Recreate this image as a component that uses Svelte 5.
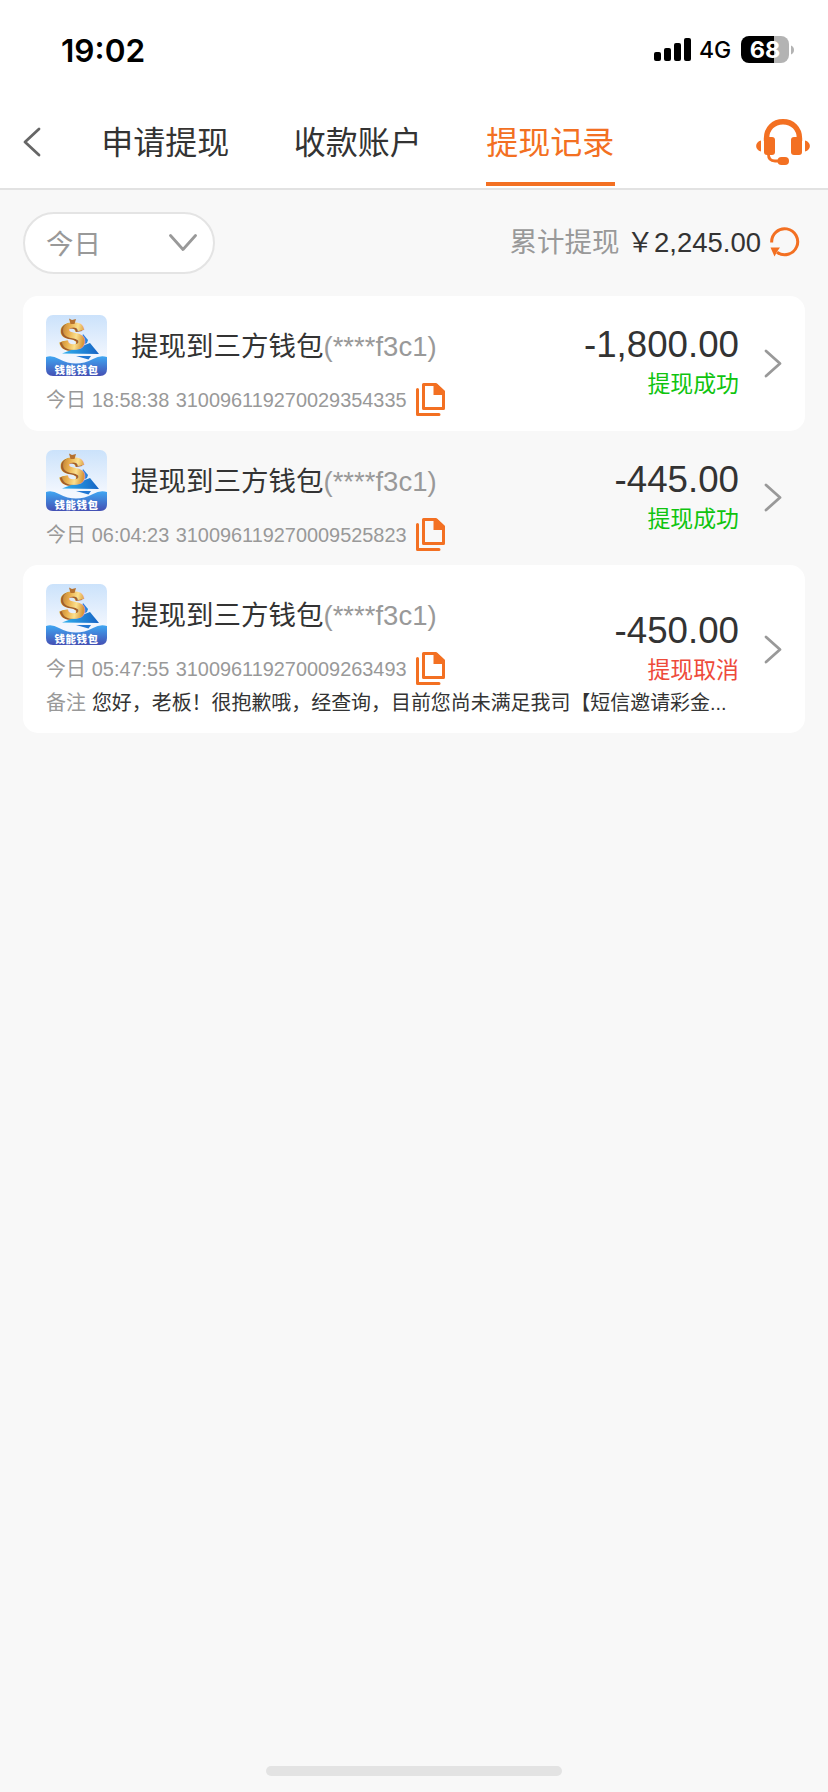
<script>
  let activeTab = "提现记录";
  const tabs = ["申请提现", "收款账户", "提现记录"];

  const records = [
    {
      time: "18:58:38",
      order: "310096119270029354335",
      amount: "-1,800.00",
      status: "提现成功",
      ok: true,
    },
    {
      time: "06:04:23",
      order: "310096119270009525823",
      amount: "-445.00",
      status: "提现成功",
      ok: true,
    },
    {
      time: "05:47:55",
      order: "310096119270009263493",
      amount: "-450.00",
      status: "提现取消",
      ok: false,
      remark: "您好，老板！很抱歉哦，经查询，目前您尚未满足我司【短信邀请彩金...",
    },
  ];
</script>

<div class="screen">
  <div class="status-bar">
    <span class="clock">19:02</span>
    <div class="indicators">
      <svg class="signal" width="37" height="23" viewBox="0 0 37 23">
        <rect x="0" y="14" width="7" height="9" rx="2" />
        <rect x="10" y="10" width="7" height="13" rx="2" />
        <rect x="20" y="5" width="7" height="18" rx="2" />
        <rect x="30" y="0" width="7" height="23" rx="2" />
      </svg>
      <span class="network">4G</span>
      <div class="battery"><span>68</span></div>
      <svg class="nub" width="3" height="10" viewBox="0 0 3 10">
        <path d="M0 0.5C4 2 4 8 0 9.5z" fill="#b3b3b3" />
      </svg>
    </div>
  </div>

  <header>
    <svg class="back" width="18" height="30" viewBox="0 0 18 30">
      <path d="M16 2L2 15L16 28" fill="none" stroke="#666" stroke-width="2.8" stroke-linecap="round" stroke-linejoin="round" />
    </svg>
    <nav>
      {#each tabs as tab}
        <button class="tab" class:active={tab === activeTab} on:click={() => (activeTab = tab)}>{tab}</button>
      {/each}
    </nav>
    <svg class="service" width="54" height="46" viewBox="0 0 54 46" fill="#f37022">
      <path d="M10.5 22V19.5C10.5 9.5 17.5 2.8 27 2.8S43.5 9.5 43.5 19.5V22" fill="none" stroke="#f37022" stroke-width="5.4" />
      <path d="M8 18H16Q19 18 19 21V33Q19 36 16 36H11Q8 36 8 33z" />
      <path d="M46 18H38Q35 18 35 21V33Q35 36 38 36H43Q46 36 46 33z" />
      <path d="M5 21.5V32.5C-1.5 31 -1.5 23 5 21.5z" />
      <path d="M49 21.5V32.5C55.5 31 55.5 23 49 21.5z" />
      <path d="M12.4 35Q12.4 42 19 42H24" fill="none" stroke="#f37022" stroke-width="2.8" />
      <rect x="21.5" y="38" width="11.5" height="8" rx="4" />
    </svg>
  </header>

  <div class="toolbar">
    <button class="filter">
      今日
      <svg width="28" height="18" viewBox="0 0 28 18">
        <path d="M1.5 1.5L14 15.5L26.5 1.5" fill="none" stroke="#999" stroke-width="2.8" stroke-linecap="round" stroke-linejoin="round" />
      </svg>
    </button>
    <div class="total">
      <span class="label">累计提现</span>
      <span class="sum">￥2,245.00</span>
      <svg width="30" height="30" viewBox="0 0 30 30">
        <path d="M1.7 15.5A13 13 0 1 1 7 25.2" fill="none" stroke="#f37022" stroke-width="3" />
        <path d="M0.5 20.5L10 20.5L7.5 24L4.5 29.5z" fill="#f37022" />
      </svg>
    </div>
  </div>

  <main>
    {#each records as record, i}
      <div class="record" class:white={i % 2 === 0}>
        <div class="info">
          <div class="wallet">
            <svg class="logo" width="61" height="61" viewBox="0 0 61 61">
              <defs>
                <linearGradient id="sky{i}" x1="0" y1="0" x2="0" y2="1">
                  <stop offset="0" stop-color="#cbe2fb" />
                  <stop offset="0.7" stop-color="#f3f7fe" />
                </linearGradient>
                <linearGradient id="wave{i}" x1="0" y1="0" x2="0" y2="1">
                  <stop offset="0" stop-color="#3fa6f2" />
                  <stop offset="1" stop-color="#4450b4" />
                </linearGradient>
                <linearGradient id="gold{i}" x1="0" y1="0" x2="1" y2="0.3">
                  <stop offset="0" stop-color="#b8742f" />
                  <stop offset="0.4" stop-color="#e9b04e" />
                  <stop offset="0.7" stop-color="#fbe08e" />
                  <stop offset="1" stop-color="#d8983c" />
                </linearGradient>
                <linearGradient id="sail{i}" x1="0" y1="0" x2="1" y2="0">
                  <stop offset="0" stop-color="#2fb0ee" />
                  <stop offset="1" stop-color="#1764c4" />
                </linearGradient>
              </defs>
              <rect width="61" height="61" rx="7" fill="url(#sky{i})" />
              <path d="M37 19L42 25L41 28L33 32z" fill="#2584dc" />
              <text class="coin back-coin" x="13.5" y="34.5">S</text>
              <path d="M16 38.5L44 28L53 39z" fill="url(#sail{i})" />
              <text class="coin" x="15.5" y="33.5" fill="url(#gold{i})" stroke="url(#gold{i})">S</text>
              <path d="M23 3.5L26 5L30 4L28.5 9H24.5z" fill="#b5712f" />
              <path d="M30 41H45L42.5 44.5z" fill="#2277d2" />
              <path d="M0 42Q6 40 13 44Q30 53 47 44Q54 40 61 42V54Q61 61 54 61H7Q0 61 0 54z" fill="url(#wave{i})" />
              <text class="logo-name" x="30.5" y="58.5" text-anchor="middle">钱能钱包</text>
            </svg>
            <span class="title">提现到三方钱包<em>(****f3c1)</em></span>
          </div>
          <div class="meta">
            <span class="day">今日</span>
            <span class="time">{record.time}</span>
            <span>{record.order}</span>
            <svg width="30" height="34" viewBox="0 0 30 34">
              <path d="M1.5 6.5V31.5H23" fill="none" stroke="#f37022" stroke-width="3" stroke-linejoin="round" stroke-linecap="round" />
              <path d="M7.5 1.5H20L27.5 8.5V25.5H7.5z" fill="none" stroke="#f37022" stroke-width="3" stroke-linejoin="round" />
              <path d="M17.5 1H21L28.5 8V12H17.5z" fill="#f37022" />
            </svg>
          </div>
          {#if record.remark}
            <div class="remark"><span>备注</span>{record.remark}</div>
          {/if}
        </div>
        <div class="result">
          <span class="amount">{record.amount}</span>
          <span class="state" class:ok={record.ok}>{record.status}</span>
        </div>
        <svg class="arrow" width="18" height="29" viewBox="0 0 18 29">
          <path d="M2 2L16 14.5L2 27" fill="none" stroke="#999" stroke-width="2.8" stroke-linecap="round" stroke-linejoin="round" />
        </svg>
      </div>
    {/each}
  </main>

  <div class="home-bar"></div>
</div>

<style>
  :global(body) {
    background-color: #f8f8f8;
  }

  .screen {
    width: 828px;
    height: 1792px;
    display: flex;
    flex-direction: column;
    background-color: #f8f8f8;
    font-family: "Liberation Sans", "Noto Sans CJK SC", sans-serif;
    color: #333;
    overflow: hidden;
  }

  svg {
    display: block;
    flex: none;
  }

  button {
    font-family: inherit;
    background: none;
    border: none;
    padding: 0;
    cursor: pointer;
  }

  .status-bar {
    height: 100px;
    box-sizing: border-box;
    padding: 36px 34px 0 61px;
    display: flex;
    justify-content: space-between;
    align-items: flex-start;
    background-color: #fff;
    color: #000;
    font-family: Inter, sans-serif;
  }

  .clock {
    font-size: 31.6px;
    font-weight: 600;
    line-height: 29px;
  }

  .indicators {
    display: flex;
    align-items: center;
    height: 27px;
  }

  .network {
    width: 33px;
    margin: 2px 9px 0 8px;
    font-size: 23px;
    font-weight: 450;
    line-height: 27px;
    white-space: nowrap;
  }

  .battery {
    width: 48px;
    height: 27px;
    border-radius: 8px;
    background: linear-gradient(to right, #000 33px, #b3b3b3 33px);
    color: #fff;
    font-size: 23.5px;
    font-weight: 700;
    line-height: 28px;
    text-align: center;
  }

  .nub {
    margin-left: 2px;
  }

  header {
    height: 90px;
    box-sizing: border-box;
    display: flex;
    align-items: center;
    padding: 0 18px 4px 23px;
    border-bottom: 2px solid #e2e2e2;
    background-color: #fff;
  }

  nav {
    display: flex;
    align-self: stretch;
    gap: 64px;
    margin-left: 60px;
    flex: 1;
  }

  .tab {
    height: 86px;
    box-sizing: border-box;
    width: 128.5px;
    border-bottom: 4px solid transparent;
    font-size: 32px;
    line-height: 48px;
    color: #333;
    padding-top: 4px;
    white-space: nowrap;
  }

  .tab.active {
    color: #f37022;
    border-bottom-color: #f37022;
  }

  .toolbar {
    display: flex;
    justify-content: space-between;
    align-items: center;
    height: 62px;
    padding: 22px 28px 22px 23px;
  }

  .filter {
    width: 192px;
    height: 62px;
    box-sizing: border-box;
    display: flex;
    justify-content: space-between;
    align-items: center;
    padding: 0 16px 2px 21px;
    border: 2px solid #e4e4e4;
    border-radius: 31px;
    background-color: #fff;
    color: #999;
    font-size: 27.5px;
  }

  .filter svg {
    margin-top: 2px;
  }

  .total {
    display: flex;
    align-items: center;
    font-size: 27.5px;
    line-height: 40px;
  }

  .label {
    color: #999;
    margin-right: 7px;
  }

  .total svg {
    margin-left: 9px;
    margin-bottom: 3px;
  }

  main {
    padding: 0 23px;
  }

  .record {
    display: flex;
    align-items: center;
    padding: 19px 23px 13px 23px;
    border-radius: 15px;
    min-height: 102.5px;
  }

  .record.white {
    background-color: #fff;
  }

  .info {
    width: 440px;
  }

  .wallet {
    display: flex;
    align-items: center;
    height: 61px;
  }

  .title {
    margin-left: 24px;
    padding-top: 3px;
    font-size: 27.5px;
    line-height: 40px;
    white-space: nowrap;
  }

  .title em {
    font-style: normal;
    color: #999;
  }

  .coin {
    font-size: 36px;
    font-weight: 700;
    stroke-width: 1.5px;
  }

  .back-coin {
    fill: #a35c28;
    stroke: #a35c28;
  }

  .logo-name {
    fill: #fff;
    font-size: 10.5px;
    font-weight: 900;
    letter-spacing: 0.5px;
  }

  .meta {
    display: flex;
    align-items: center;
    height: 34px;
    margin-top: 7px;
    color: #999;
    font-size: 19.9px;
    line-height: 34px;
    white-space: nowrap;
  }

  .day {
    margin-right: 6px;
  }

  .time {
    margin-right: 6.5px;
  }

  .meta svg {
    margin-left: 9px;
  }

  .remark {
    font-size: 19.95px;
    line-height: 30px;
    margin-top: 2px;
    padding-bottom: 2px;
    white-space: nowrap;
  }

  .remark span {
    color: #999;
    margin-right: 6px;
  }

  .result {
    flex: 1;
    display: flex;
    flex-direction: column;
    align-items: flex-end;
    padding-bottom: 6px;
  }

  .amount {
    font-size: 36.7px;
    line-height: 42px;
  }

  .state {
    font-size: 22.9px;
    line-height: 36px;
    color: #ee4a3a;
  }

  .state.ok {
    color: #0fc40f;
  }

  .arrow {
    margin-left: 25px;
    margin-bottom: 6px;
  }

  .home-bar {
    width: 296px;
    height: 10px;
    margin: auto auto 16px;
    border-radius: 5px;
    background-color: #e3e3e3;
  }
</style>
